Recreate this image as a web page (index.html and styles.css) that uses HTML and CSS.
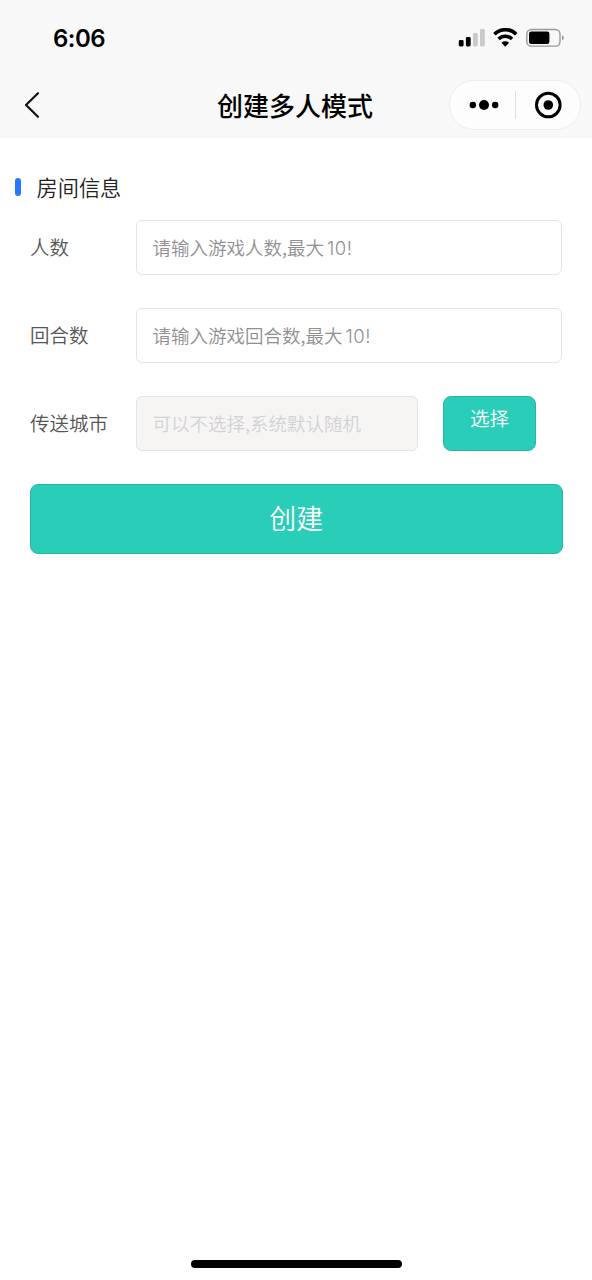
FILE: index.html
```html
<!DOCTYPE html>
<html lang="zh-CN">
<head>
<meta charset="utf-8">
<title>创建多人模式</title>
<link rel="stylesheet" href="styles.css">
</head>
<body>
<div class="screen">
  <header class="top">
    <div class="status">
      <span class="time">6:06</span>
      <svg class="indicators" width="108" height="20" viewBox="0 0 108 20">
        <rect x="0.800" y="12" width="4.800" height="6.500" rx="1.400"/>
        <rect x="7.900" y="9" width="4.800" height="9.500" rx="1.400"/>
        <rect class="dim" x="15" y="5" width="4.800" height="13.500" rx="1.400"/>
        <rect class="dim" x="22" y="1" width="4.800" height="17.500" rx="1.400"/>
        <path class="wave" d="M36.400 6.200A15.500 15.500 0 0 1 58.200 6.200"/>
        <path class="wave" d="M40.600 11A9.400 9.400 0 0 1 54 11"/>
        <path d="M43.500 14.800A5.600 5.600 0 0 1 51.100 14.800L47.300 18.700Z"/>
        <rect class="shell" x="68.800" y="1.500" width="33.200" height="16.600" rx="4.600"/>
        <rect x="71" y="3.600" width="20.400" height="12.400" rx="2.200"/>
        <path class="cap" d="M104 7.200q1.900.8 1.900 2.600T104 12.400Z"/>
      </svg>
    </div>
    <nav class="nav">
      <svg class="back" width="18" height="28" viewBox="0 0 18 28"><path d="M16 2.200L4 14L16 25.800"/></svg>
      <h1 class="title">创建多人模式</h1>
      <div class="capsule">
        <svg width="66" height="48" viewBox="0 0 66 48"><circle cx="22.800" cy="24" r="3.200"/><circle cx="34" cy="24" r="5"/><circle cx="45.200" cy="24" r="3.200"/></svg>
        <span class="divider"></span>
        <svg width="64" height="48" viewBox="0 0 64 48"><circle class="ring" cx="32.300" cy="24" r="11.800"/><circle cx="32.300" cy="24" r="4.800"/></svg>
      </div>
    </nav>
  </header>
  <main class="content">
    <h2 class="section">房间信息</h2>
    <form class="form">
      <div class="row"><span class="label">人数</span><div class="field">请输入游戏人数,最大<span class="num">10!</span></div></div>
      <div class="row"><span class="label">回合数</span><div class="field">请输入游戏回合数,最大<span class="num">10!</span></div></div>
      <div class="row"><span class="label">传送城市</span><div class="field disabled">可以不选择,系统默认随机</div><button type="button" class="btn pick">选择</button></div>
      <button type="button" class="btn create">创建</button>
    </form>
  </main>
  <footer class="home"><span class="home-bar"></span></footer>
</div>
</body>
</html>
```
FILE: styles.css
```css
* { box-sizing: border-box; }
body { margin: 0; background: #fff; font-family: "Noto Sans CJK SC", sans-serif; font-weight: 350; }
.screen { width: 592px; height: 1280px; display: flex; flex-direction: column; }
.top { height: 138px; background: #f8f8f8; }
.status { height: 76px; padding: 0 26px 0 53px; display: flex; align-items: center; justify-content: space-between; }
.time { padding-top: 1px; font: 600 24px/30px Inter, sans-serif; letter-spacing: -0.5px; color: #000; }
.indicators .dim { fill: #c9c9c9; }
.indicators .wave { fill: none; stroke: #000; stroke-width: 3.6; }
.indicators .shell { fill: none; stroke: #999; stroke-width: 1.4; }
.indicators .cap { fill: #999; }
.nav { height: 58px; padding: 0 11px 0 22px; display: grid; grid-template-columns: 131px 1fr 131px; align-items: center; }
.back path { fill: none; stroke: #111; stroke-width: 2.2; stroke-linecap: round; stroke-linejoin: round; }
.title { margin: 0 0 1px -13px; text-align: center; font-size: 26px; line-height: 36px; font-weight: 500; color: #000; }
.capsule { width: 132px; height: 50px; margin-left: -1px; border: 1px solid #ededed; border-radius: 25px; background: #fdfdfd; display: flex; align-items: center; }
.divider { width: 1px; height: 28px; margin-left: -1px; background: #e0e0e0; }
.ring { fill: none; stroke: #000; stroke-width: 3; }
.content { flex: 1; padding: 33px 30px 0; }
.section { margin: 0 0 0 -15px; height: 30px; display: flex; align-items: center; gap: 15.5px; font-size: 21.2px; font-weight: 350; color: #222; }
.section::before { content: ""; width: 6px; height: 18px; margin-top: 2px; border-radius: 3px; background: #2878ff; }
.form { padding-top: 19px; display: flex; flex-direction: column; gap: 33px; }
.row { height: 55px; display: flex; align-items: center; }
.label { width: 106px; padding-bottom: 2px; font-size: 19.5px; line-height: 28px; color: #555; }
.field { flex: 1; height: 55px; padding: 0 15.5px; border: 1.5px solid #e4e4e4; border-radius: 6px; font-size: 18.5px; line-height: 53px; color: #909090; white-space: nowrap; }
.num { margin-left: 3px; font-family: Inter, sans-serif; font-size: 18.5px; letter-spacing: 0.5px; }
.field.disabled { flex: none; width: 282px; background: #f6f5f4; color: #d2d2d4; }
.btn { padding: 0; border: 1px solid #25b7a3; border-radius: 8px; background: #2acdb7; color: #fff; font-family: inherit; font-weight: 350; }
.pick { width: 93px; height: 55px; margin-left: 25px; padding-bottom: 11px; font-size: 19.5px; line-height: 28px; }
.create { width: 532.5px; height: 70px; padding-bottom: 2px; font-size: 27px; line-height: 40px; }
.home { height: 24px; display: flex; justify-content: center; padding-top: 4px; }
.home-bar { width: 211px; height: 8px; border-radius: 4px; background: #000; }
```
